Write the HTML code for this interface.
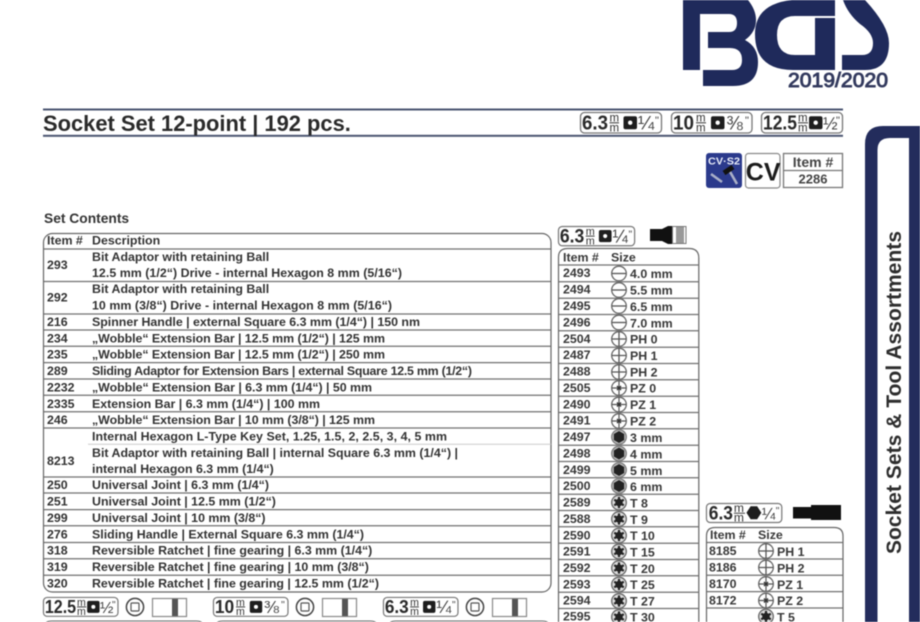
<!DOCTYPE html>
<html><head><meta charset="utf-8"><title>Socket Set 12-point</title>
<style>
html,body{margin:0;padding:0;background:#fff;width:920px;height:622px;overflow:hidden}
svg{display:block;filter:blur(.4px)}
text{font-family:"Liberation Sans",sans-serif;font-weight:700;fill:#333}
.t{font-size:12.4px}
.r{font-size:12.4px;fill:#383838}
.n{font-weight:400;fill:#444}
.l{stroke:#707070;stroke-width:1.25;fill:none}
.b{fill:#fff;stroke:#777;stroke-width:1.3}
.m{font-size:11.5px;fill:#333;font-weight:400}
.d{fill:#2a2a2a}
</style></head><body>
<svg xmlns="http://www.w3.org/2000/svg" width="920" height="622" viewBox="0 0 920 622">
<defs>
<g id="o"><circle r="7.3" fill="#fff" stroke="#666" stroke-width="1.3"/></g>
<g id="minus"><use href="#o"/><path d="M-7 0H7" stroke="#555" stroke-width="1.3"/></g>
<g id="ph"><use href="#o"/><path d="M-7 0H7M0-7V7" stroke="#555" stroke-width="1.3"/></g>
<g id="pz"><use href="#o"/><path d="M-7 0H7M0-7V7" stroke="#555" stroke-width="1.2"/><path d="M-2-2L2 2M2-2L-2 2" stroke="#333" stroke-width="1.4"/></g>
<g id="hex"><circle r="7.3" fill="#bbb" stroke="#777" stroke-width="1.2"/><path d="M0-6L5.2-3V3L0 6L-5.2 3V-3Z" fill="#222"/></g>
<g id="tx"><circle r="7.3" fill="#ddd" stroke="#666" stroke-width="1.3"/><circle r="3.8" fill="#222"/><path d="M0-5.6V5.6M-4.8-2.8L4.8 2.8M4.8-2.8L-4.8 2.8" stroke="#222" stroke-width="2.2"/></g>
<g id="sq"><rect width="13.5" height="13" rx="2" fill="#1e1e1e"/><circle cx="6.7" cy="6.5" r="2.2" fill="#fff"/></g>
<g id="sock"><circle r="8.6" fill="#fff" stroke="#444" stroke-width="1.5"/><rect x="-4" y="-4" width="8" height="8" rx="1" fill="none" stroke="#555" stroke-width="1.2"/></g>
<g id="ext"><rect x=".5" y=".5" width="34" height="18" fill="#fff" stroke="#888" stroke-width="1.2"/><rect x="20" y="1" width="6" height="17" fill="#555"/></g>
</defs>

<!-- BGS logo -->
<g fill="#1f2a5b">
<path d="M683 0H748Q756 10 756 20Q756 32 745 40Q758 47 758 62Q758 86 733 86H703V70H732Q742 70 742 60Q742 48 730 48H708V32H729Q737 32 737 23Q737 14 729 14H700V70H683Z"/>
<path d="M792 0H835V16H795Q777 16 777 35Q777 55 795 55H815V18H835V70H793Q755 70 755 34Q755 4 792 0Z"/>
<path d="M838 0H865Q889 26 889 43Q889 70 865 70H842V55H862Q873 55 873 43Q873 33 860 24Q848 14 843 0Z"/>
</g>
<text x="788" y="87" font-size="20" textLength="100" lengthAdjust="spacingAndGlyphs" style="fill:#333a5e;font-weight:400;stroke:#333a5e;stroke-width:.9">2019/2020</text>

<!-- Title -->
<rect x="43" y="108.5" width="800" height="2" fill="#4a5470"/>
<rect x="43" y="134.8" width="800" height="2" fill="#4a5470"/>
<text x="43" y="131" font-size="21.9" style="fill:#2a2a2a">Socket Set 12-point | 192 pcs.</text>

<!-- Top badges -->
<g transform="translate(580,112)">
<rect class="b" x=".5" y=".5" width="81" height="20.5" rx="4"/>
<text class="d" x="2" y="17.5" font-size="20.5" textLength="26" lengthAdjust="spacingAndGlyphs">6.3</text>
<text class="m" x="29.5" y="9.5">m</text><path d="M29.5 10.8H39" stroke="#333"/><text class="m" x="29.5" y="19.5">m</text>
<use href="#sq" x="43.5" y="4.2"/>
<text class="n" x="58" y="17.5" font-size="19.5">¼</text><text class="n" x="75" y="12" font-size="11">"</text>
</g>
<g transform="translate(671,112)">
<rect class="b" x=".5" y=".5" width="80.5" height="20.5" rx="4"/>
<text class="d" x="2" y="17.5" font-size="20.5" textLength="21" lengthAdjust="spacingAndGlyphs">10</text>
<text class="m" x="25" y="9.5">m</text><path d="M25 10.8H35" stroke="#333"/><text class="m" x="25" y="19.5">m</text>
<use href="#sq" x="40" y="4.2"/>
<text class="n" x="55.5" y="17.5" font-size="19.5">⅜</text><text class="n" x="74" y="12" font-size="11">"</text>
</g>
<g transform="translate(761,112)">
<rect class="b" x=".5" y=".5" width="81" height="20.5" rx="4"/>
<text class="d" x="2" y="17.5" font-size="20.5" textLength="34" lengthAdjust="spacingAndGlyphs">12.5</text>
<text class="m" x="37" y="9.5">m</text><path d="M37 10.8H47" stroke="#333"/><text class="m" x="37" y="19.5">m</text>
<use href="#sq" x="48" y="4.2"/>
<text class="n" x="62" y="17.5" font-size="17.5">½</text><text class="n" x="75" y="12" font-size="11">"</text>
</g>

<!-- CV badges -->
<rect x="706" y="153" width="36" height="35" rx="3" fill="#2b3a8c"/>
<text x="708" y="164.5" font-size="10.5" textLength="32" lengthAdjust="spacingAndGlyphs" style="fill:#e8ecf8">CV·S2</text>
<path d="M711 174L722 182M729 170L737 184" stroke="#aab0c8" stroke-width="2.6"/>
<path d="M724 173L733 167" stroke="#111" stroke-width="5"/>
<rect x="745.5" y="153.5" width="34.5" height="34.5" rx="3" fill="#fff" stroke="#888" stroke-width="1.2"/>
<text x="745.8" y="180.5" font-size="25" style="fill:#1c1c1c">CV</text>
<rect x="783.5" y="153.5" width="59" height="34" fill="#fff" stroke="#777" stroke-width="1.3"/>
<path d="M783 170.5H843" stroke="#777" stroke-width="1.3"/>
<text x="813" y="167" font-size="14" text-anchor="middle" style="fill:#444">Item #</text>
<text x="813" y="183.5" font-size="13" text-anchor="middle" style="fill:#444">2286</text>

<!-- Set contents -->
<text x="44" y="223" font-size="13.8">Set Contents</text>
<rect x="43.5" y="233.5" width="507.5" height="358.5" rx="9" fill="#fff" stroke="#666" stroke-width="1.2"/>
<path class="l" d="M44 249H551M44 281.5H551M44 314H551M44 330H551M44 346.3H551M44 362.6H551M44 379H551M44 395.3H551M44 411.7H551M44 428H551M44 477H551M44 493H551M44 509.6H551M44 525.8H551M44 542.5H551M44 558.8H551M44 575.2H551"/>
<path d="M88 444.3H551" stroke="#ccc" stroke-width="1"/>
<text class="t" x="47" y="244.5">Item #</text><text class="t" x="92" y="244.5">Description</text>
<text class="t" x="47" y="269">293</text><text class="t" x="92" y="261">Bit Adaptor with retaining Ball</text><text class="t" x="92" y="277" textLength="310">12.5 mm (1/2“) Drive - internal Hexagon 8 mm (5/16“)</text>
<text class="t" x="47" y="301.5">292</text><text class="t" x="92" y="293">Bit Adaptor with retaining Ball</text><text class="t" x="92" y="309.5" textLength="300">10 mm (3/8“) Drive - internal Hexagon 8 mm (5/16“)</text>
<text class="t" x="47" y="326">216</text><text class="t" x="92" y="326" textLength="328">Spinner Handle | external Square 6.3 mm (1/4“) | 150 nm</text>
<text class="t" x="47" y="342.5">234</text><text class="t" x="92" y="342.5" textLength="293">„Wobble“ Extension Bar | 12.5 mm (1/2“) | 125 mm</text>
<text class="t" x="47" y="358.5">235</text><text class="t" x="92" y="358.5" textLength="293">„Wobble“ Extension Bar | 12.5 mm (1/2“) | 250 mm</text>
<text class="t" x="47" y="375">289</text><text class="t" x="92" y="375" textLength="380">Sliding Adaptor for Extension Bars | external Square 12.5 mm (1/2“)</text>
<text class="t" x="47" y="391.5">2232</text><text class="t" x="92" y="391.5" textLength="280">„Wobble“ Extension Bar | 6.3 mm (1/4“) | 50 mm</text>
<text class="t" x="47" y="408">2335</text><text class="t" x="92" y="408">Extension Bar | 6.3 mm (1/4“) | 100 mm</text>
<text class="t" x="47" y="424">246</text><text class="t" x="92" y="424" textLength="283">„Wobble“ Extension Bar | 10 mm (3/8“) | 125 mm</text>
<text class="t" x="92" y="440.5" textLength="355">Internal Hexagon L-Type Key Set, 1.25, 1.5, 2, 2.5, 3, 4, 5 mm</text>
<text class="t" x="47" y="465">8213</text><text class="t" x="92" y="457" textLength="366">Bit Adaptor with retaining Ball | internal Square 6.3 mm (1/4“) |</text><text class="t" x="92" y="473">internal Hexagon 6.3 mm (1/4“)</text>
<text class="t" x="47" y="489">250</text><text class="t" x="92" y="489">Universal Joint | 6.3 mm (1/4“)</text>
<text class="t" x="47" y="505.5">251</text><text class="t" x="92" y="505.5">Universal Joint | 12.5 mm (1/2“)</text>
<text class="t" x="47" y="522">299</text><text class="t" x="92" y="522">Universal Joint | 10 mm (3/8“)</text>
<text class="t" x="47" y="538.5">276</text><text class="t" x="92" y="538.5">Sliding Handle | External Square 6.3 mm (1/4“)</text>
<text class="t" x="47" y="554.5">318</text><text class="t" x="92" y="554.5">Reversible Ratchet | fine gearing | 6.3 mm (1/4“)</text>
<text class="t" x="47" y="571">319</text><text class="t" x="92" y="571">Reversible Ratchet | fine gearing | 10 mm (3/8“)</text>
<text class="t" x="47" y="587.5">320</text><text class="t" x="92" y="587.5" textLength="287">Reversible Ratchet | fine gearing | 12.5 mm (1/2“)</text>

<!-- Bottom badges -->
<g transform="translate(43,597) scale(.92)">
<rect class="b" x=".5" y=".5" width="81" height="20.5" rx="4"/>
<text class="d" x="2" y="17.5" font-size="20.5" textLength="34" lengthAdjust="spacingAndGlyphs">12.5</text>
<text class="m" x="37" y="9.5">m</text><path d="M37 10.8H47" stroke="#333"/><text class="m" x="37" y="19.5">m</text>
<use href="#sq" x="48" y="4.2"/><text class="n" x="62" y="17.5" font-size="17.5">½</text><text class="n" x="75" y="12" font-size="11">"</text>
</g>
<use href="#sock" x="135" y="607"/><use href="#ext" x="152" y="598"/>
<g transform="translate(213,597) scale(.92)">
<rect class="b" x=".5" y=".5" width="81" height="20.5" rx="4"/>
<text class="d" x="2" y="17.5" font-size="20.5" textLength="21" lengthAdjust="spacingAndGlyphs">10</text>
<text class="m" x="25" y="9.5">m</text><path d="M25 10.8H35" stroke="#333"/><text class="m" x="25" y="19.5">m</text>
<use href="#sq" x="40" y="4.2"/><text class="n" x="55.5" y="17.5" font-size="19.5">⅜</text><text class="n" x="74" y="12" font-size="11">"</text>
</g>
<use href="#sock" x="305" y="607"/><use href="#ext" x="322" y="598"/>
<g transform="translate(383,597) scale(.92)">
<rect class="b" x=".5" y=".5" width="81" height="20.5" rx="4"/>
<text class="d" x="2" y="17.5" font-size="20.5" textLength="26" lengthAdjust="spacingAndGlyphs">6.3</text>
<text class="m" x="29.5" y="9.5">m</text><path d="M29.5 10.8H39" stroke="#333"/><text class="m" x="29.5" y="19.5">m</text>
<use href="#sq" x="43.5" y="4.2"/><text class="n" x="58" y="17.5" font-size="19.5">¼</text><text class="n" x="75" y="12" font-size="11">"</text>
</g>
<use href="#sock" x="475" y="607"/><use href="#ext" x="492" y="598"/>
<path d="M44 627Q44 621 52 621H196Q204 621 204 627M215 627Q215 621 223 621H370Q378 621 378 627M388 627Q388 621 396 621H542Q550 621 550 627" fill="none" stroke="#666" stroke-width="1.1"/>

<!-- Bit table 1 -->
<g transform="translate(558,226) scale(.94)">
<rect class="b" x=".5" y=".5" width="81" height="20.5" rx="4"/>
<text class="d" x="2" y="17.5" font-size="20.5" textLength="26" lengthAdjust="spacingAndGlyphs">6.3</text>
<text class="m" x="29.5" y="9.5">m</text><path d="M29.5 10.8H39" stroke="#333"/><text class="m" x="29.5" y="19.5">m</text>
<use href="#sq" x="43.5" y="4.2"/><text class="n" x="58" y="17.5" font-size="19.5">¼</text><text class="n" x="75" y="12" font-size="11">"</text>
</g>
<path d="M650 229H662L668 226H672V244H668L662 241H650Z" fill="#111"/>
<rect x="672.5" y="226.5" width="13.5" height="17" fill="#fff" stroke="#777"/>
<rect x="676" y="227" width="8" height="16" fill="#999"/>
<path d="M558.5 630V257Q558.5 248.5 568 248.5H689Q698.8 248.5 698.8 258V630" fill="#fff" stroke="#666" stroke-width="1.2"/>
<path class="l" d="M559 265H699M559 281.8H699M559 298.2H699M559 314.5H699M559 330.8H699M559 347.2H699M559 363.5H699M559 379.8H699M559 396.2H699M559 412.5H699M559 428.8H699M559 445.2H699M559 461.5H699M559 477.8H699M559 494.2H699M559 510.5H699M559 526.8H699M559 543.2H699M559 559.5H699M559 575.8H699M559 592.2H699M559 608.5H699"/>
<text class="r" x="563" y="261.5">Item #</text><text class="r" x="611" y="261.5">Size</text>
<text class="r" x="563" y="277">2493</text><use href="#minus" x="619" y="273.5"/><text class="r" x="630" y="278">4.0 mm</text>
<text class="r" x="563" y="293.5">2494</text><use href="#minus" x="619" y="290"/><text class="r" x="630" y="294.5">5.5 mm</text>
<text class="r" x="563" y="310">2495</text><use href="#minus" x="619" y="306"/><text class="r" x="630" y="311">6.5 mm</text>
<text class="r" x="563" y="326.5">2496</text><use href="#minus" x="619" y="322.5"/><text class="r" x="630" y="327.5">7.0 mm</text>
<text class="r" x="563" y="343">2504</text><use href="#ph" x="619" y="339"/><text class="r" x="630" y="343.5">PH 0</text>
<text class="r" x="563" y="359">2487</text><use href="#ph" x="619" y="355.5"/><text class="r" x="630" y="360">PH 1</text>
<text class="r" x="563" y="375.5">2488</text><use href="#ph" x="619" y="372"/><text class="r" x="630" y="376.5">PH 2</text>
<text class="r" x="563" y="392">2505</text><use href="#pz" x="619" y="388"/><text class="r" x="630" y="392.5">PZ 0</text>
<text class="r" x="563" y="408.5">2490</text><use href="#pz" x="619" y="404.5"/><text class="r" x="630" y="409">PZ 1</text>
<text class="r" x="563" y="424.5">2491</text><use href="#pz" x="619" y="421"/><text class="r" x="630" y="425.5">PZ 2</text>
<text class="r" x="563" y="441">2497</text><use href="#hex" x="619" y="437"/><text class="r" x="630" y="442">3 mm</text>
<text class="r" x="563" y="457.5">2498</text><use href="#hex" x="619" y="453.5"/><text class="r" x="630" y="458.5">4 mm</text>
<text class="r" x="563" y="474">2499</text><use href="#hex" x="619" y="470"/><text class="r" x="630" y="475">5 mm</text>
<text class="r" x="563" y="490">2500</text><use href="#hex" x="619" y="486"/><text class="r" x="630" y="491">6 mm</text>
<text class="r" x="563" y="506.5">2589</text><use href="#tx" x="619" y="502.5"/><text class="r" x="630" y="507.5">T 8</text>
<text class="r" x="563" y="523">2588</text><use href="#tx" x="619" y="519"/><text class="r" x="630" y="524">T 9</text>
<text class="r" x="563" y="539.5">2590</text><use href="#tx" x="619" y="535.5"/><text class="r" x="630" y="540">T 10</text>
<text class="r" x="563" y="555.5">2591</text><use href="#tx" x="619" y="551.5"/><text class="r" x="630" y="556.5">T 15</text>
<text class="r" x="563" y="572">2592</text><use href="#tx" x="619" y="568"/><text class="r" x="630" y="573">T 20</text>
<text class="r" x="563" y="588.5">2593</text><use href="#tx" x="619" y="584.5"/><text class="r" x="630" y="589">T 25</text>
<text class="r" x="563" y="604.5">2594</text><use href="#tx" x="619" y="601"/><text class="r" x="630" y="605.5">T 27</text>
<text class="r" x="563" y="620.5">2595</text><use href="#tx" x="619" y="617"/><text class="r" x="630" y="621.5">T 30</text>

<!-- Bit table 2 -->
<g transform="translate(706,503) scale(.93)">
<rect class="b" x=".5" y=".5" width="81" height="20.5" rx="4"/>
<text class="d" x="3" y="17.5" font-size="20.5" textLength="26" lengthAdjust="spacingAndGlyphs">6.3</text>
<text x="30" y="9.5" font-size="13" style="font-weight:400">m</text><path d="M30 11H42" stroke="#333"/><text x="30" y="20" font-size="13" style="font-weight:400">m</text>
<path d="M48 3.5H55L59.5 10.5L55 17.5H48L43.5 10.5Z" fill="#1e1e1e"/>
<text class="n" x="60" y="17.5" font-size="17.5">¼</text><text class="n" x="75" y="12" font-size="11">"</text>
</g>
<path d="M793 507H811V505H841V520H811V518.5H793Z" fill="#111"/>
<path d="M706.5 630V536Q706.5 527.5 715 527.5H834Q843 527.5 843 536V630" fill="#fff" stroke="#666" stroke-width="1.2"/>
<path class="l" d="M707 542.5H843M707 559H843M707 575.3H843M707 591.6H843M707 608H843"/>
<text class="r" x="710" y="539">Item #</text><text class="r" x="758" y="539">Size</text>
<text class="r" x="709" y="555">8185</text><use href="#ph" x="766" y="551"/><text class="r" x="777" y="556">PH 1</text>
<text class="r" x="709" y="571.5">8186</text><use href="#ph" x="766" y="567.5"/><text class="r" x="777" y="572.5">PH 2</text>
<text class="r" x="709" y="588">8170</text><use href="#pz" x="766" y="584"/><text class="r" x="777" y="589">PZ 1</text>
<text class="r" x="709" y="604.5">8172</text><use href="#pz" x="766" y="600.5"/><text class="r" x="777" y="605">PZ 2</text>
<use href="#tx" x="766" y="616.5"/><text class="r" x="777" y="621.5">T 5</text>

<!-- Side tab -->
<path d="M865 640V144Q865 126 883 126H920V640Z" fill="#232c5c"/>
<path d="M877.5 640V150Q877.5 138 890 138H909V640Z" fill="#fff"/>
<text transform="translate(901,554) rotate(-90)" font-size="20.9" textLength="323" style="fill:#2d2d2d">Socket Sets &amp; Tool Assortments</text>
</svg>
</body></html>
